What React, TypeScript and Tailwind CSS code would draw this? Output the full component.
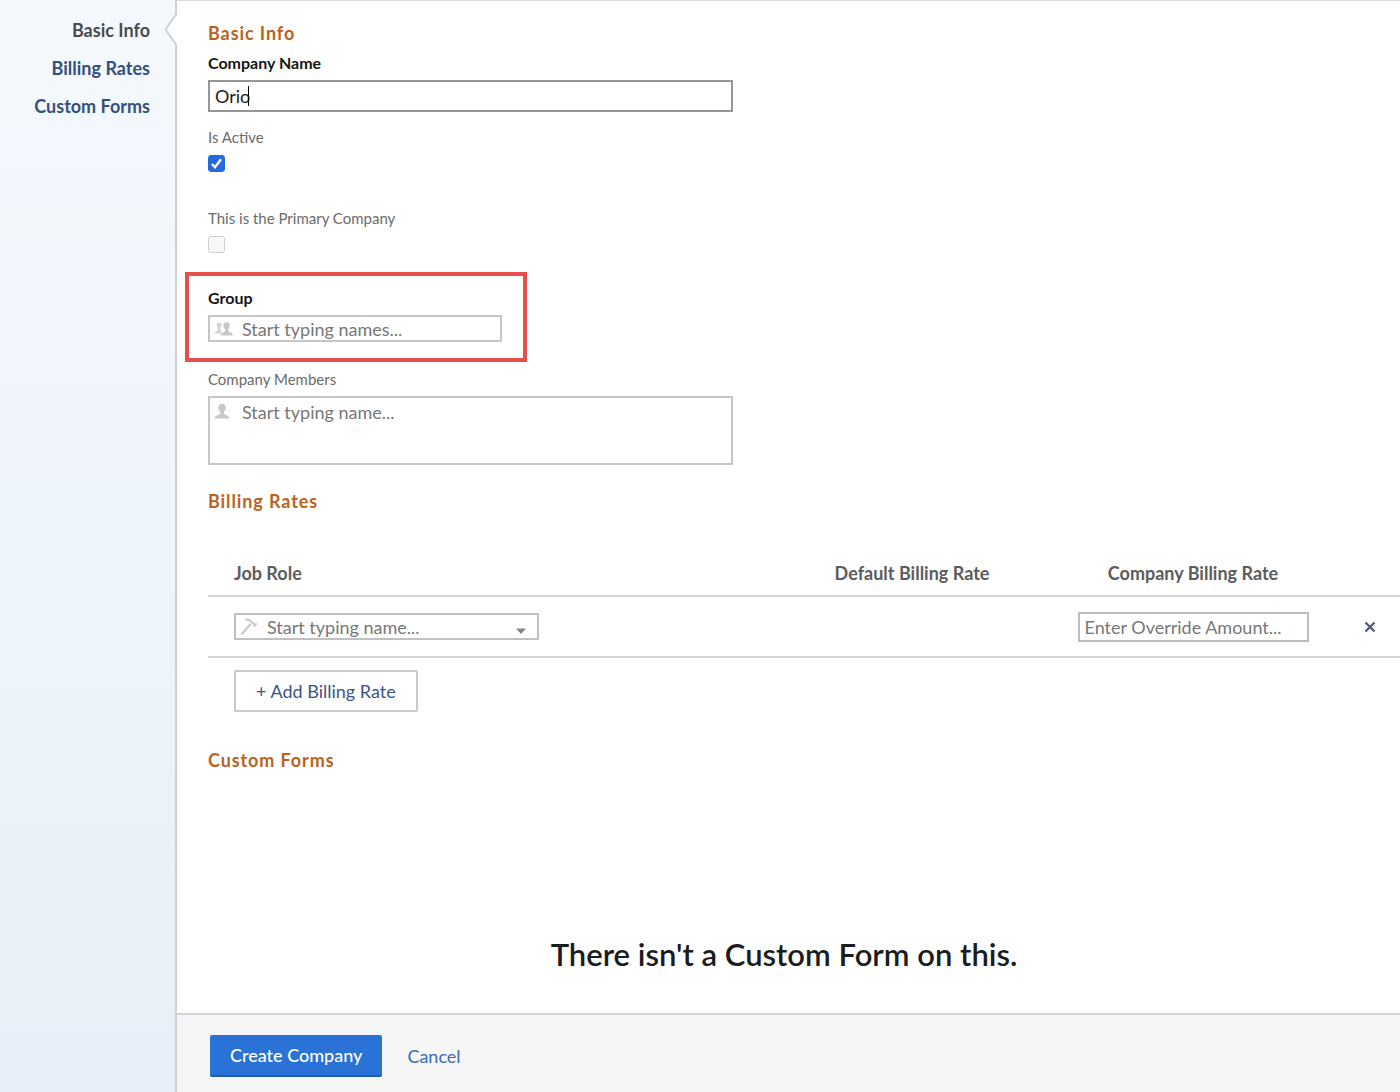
import { useState, type InputHTMLAttributes, type ReactNode } from "react";

const navItems = [
  { label: "Basic Info", href: "#basic-info" },
  { label: "Billing Rates", href: "#billing-rates" },
  { label: "Custom Forms", href: "#custom-forms" },
];

function PersonIcon() {
  return (
    <svg viewBox="0 0 16 16" className="mt-px h-4 w-4 fill-[#c8c8c8]" aria-hidden="true">
      <path d="M8 0.8c2.4 0 3.8 1.5 3.7 3.7-.1 1.900-.7 3.300-1.700 4.300v1.700c0 .9 1 1.200 2.500 1.700 1.700.500 2.700 1.200 2.700 3.300H.8c0-2.100 1-2.800 2.700-3.300C5 11.700 6 11.400 6 10.500V8.800C5 7.800 4.400 6.400 4.300 4.500 4.200 2.300 5.600.8 8 .8z" />
    </svg>
  );
}

function GroupIcon() {
  return (
    <svg viewBox="0 0 20 16" className="h-4 w-5" aria-hidden="true">
      <path
        className="fill-[#d4d4d4]"
        d="M3.200 1.800h3.600c.6.500.7 1.200.6 2.300-.1 1.300-.4 2.200-.9 2.900v2.300c0 .700.5 1 1.300 1.300l-1 2H.8c0-1.500.6-2 1.600-2.400.8-.3 1.300-.5 1.300-1.200V7c-.6-.7-1-1.600-1-2.900 0-1 .1-1.700.5-2.300z"
      />
      <path
        className="fill-[#c8c8c8]"
        d="M12.600 1.200c2.200 0 3.300 1.200 3.200 3-.1 1.700-.6 2.900-1.500 3.800v1.800c0 .8.900 1.200 2.200 1.600 1.600.5 2.300 1.200 2.300 3.100H6.600c0-1.900.7-2.600 2.200-3.100 1.300-.4 2.200-.8 2.200-1.600V8C10.100 7.100 9.500 5.900 9.400 4.200c-.1-1.800 1-3 3.200-3z"
      />
    </svg>
  );
}

function HammerIcon() {
  return (
    <svg viewBox="0 0 18 18" className="h-[18px] w-[18px] fill-none stroke-[#cbcbcb]" aria-hidden="true">
      <path d="M1.500 16.500 11 5.500" strokeWidth="2.400" />
      <path d="M5.500 1.600c2.400-.2 4.200.6 5.800 2l4.700 4" strokeWidth="2" />
      <path d="M13.600 8.600l3-3.200" strokeWidth="2" />
    </svg>
  );
}

function SectionTitle({ children, id }: { children: ReactNode; id: string }) {
  return (
    <h2 id={id} className="text-lg leading-6 font-bold tracking-wider text-[#b9631f]">
      {children}
    </h2>
  );
}

function FieldLabel({ htmlFor, required, children }: { htmlFor: string; required?: boolean; children: ReactNode }) {
  return (
    <label
      htmlFor={htmlFor}
      className={
        required
          ? "block self-start text-base leading-5 font-bold text-[#151515]"
          : "block self-start text-[15px] leading-5 text-[#6b6b6b]"
      }
    >
      {children}
    </label>
  );
}

function Checkbox(props: InputHTMLAttributes<HTMLInputElement>) {
  return (
    <span className="relative block h-[17px] w-[17px]">
      <input
        type="checkbox"
        className="peer block h-full w-full appearance-none rounded-[3px] border border-[#cfcfcf] bg-[#f8f8f8] checked:border-[#2569e0] checked:bg-[#2569e0]"
        {...props}
      />
      <svg
        viewBox="0 0 17 17"
        className="pointer-events-none absolute inset-0 hidden h-full w-full fill-none stroke-white peer-checked:block"
        aria-hidden="true"
      >
        <path d="M4 9l3 3.200 6-8" strokeWidth="2.400" />
      </svg>
    </span>
  );
}

export default function App() {
  const [name, setName] = useState("Orio");
  const [active, setActive] = useState(true);

  return (
    <div className="flex min-h-screen bg-white font-['Lato','Open_Sans',sans-serif]">
      <aside className="relative w-[177px] shrink-0 border-r-2 border-[#cdd0d4] bg-linear-to-b from-[#f5f9fe] to-[#e7f0f8]">
        <nav className="flex flex-col items-end gap-[14px] pt-[18px] pr-[25px] text-lg leading-6 font-bold">
          {navItems.map((item, i) => (
            <a key={item.href} href={item.href} className={i === 0 ? "text-[#4a4b4d]" : "text-[#34507f]"}>
              {item.label}
            </a>
          ))}
        </nav>
        <svg viewBox="0 0 13 34" className="absolute top-[13px] -right-[2px] h-[34px] w-[13px]" aria-hidden="true">
          <path d="M13 0 1.500 16.500 13 34z" fill="#fff" />
          <path d="M12 0v1.500L1.500 16.500 12 31.500V34" fill="none" stroke="#cdd0d4" strokeWidth="2" />
        </svg>
      </aside>

      <div className="flex min-w-0 flex-1 flex-col border-t border-[#d9dbde]">
        <main className="flex-1 pt-5 pl-[31px]">
          <SectionTitle id="basic-info">Basic Info</SectionTitle>

          <div className="mt-2 flex max-w-[525px] flex-col gap-[7px]">
            <FieldLabel htmlFor="company-name" required>
              Company Name
            </FieldLabel>
            <div className="relative">
              <input
                id="company-name"
                value={name}
                onChange={(e) => setName(e.target.value)}
                className="block h-8 w-full border-2 border-[#969696] px-[5px] text-lg text-[#1c1c1c] outline-none"
              />
              <span className="absolute top-[6px] left-10 h-5 w-px bg-black" />
            </div>
          </div>

          <div className="mt-[15px] flex flex-col gap-2">
            <FieldLabel htmlFor="is-active">Is Active</FieldLabel>
            <Checkbox id="is-active" checked={active} onChange={(e) => setActive(e.target.checked)} />
          </div>

          <div className="mt-9 flex flex-col gap-2">
            <FieldLabel htmlFor="is-primary">This is the Primary Company</FieldLabel>
            <Checkbox id="is-primary" disabled />
          </div>

          <div className="relative mt-[35px] flex max-w-[294px] flex-col gap-[7px]">
            <div className="pointer-events-none absolute -top-4 -right-[25px] -bottom-5 -left-[23px] border-4 border-[#e84e4c]" />
            <FieldLabel htmlFor="group" required>
              Group
            </FieldLabel>
            <div className="flex h-[27px] items-center gap-2 border-2 border-[#c6c6c6] pl-1">
              <GroupIcon />
              <input
                id="group"
                placeholder="Start typing names..."
                className="min-w-0 flex-1 text-lg leading-6 outline-none placeholder:text-[#777]"
              />
            </div>
          </div>

          <div className="mt-[27px] flex max-w-[525px] flex-col gap-[7px]">
            <FieldLabel htmlFor="members">Company Members</FieldLabel>
            <div className="flex h-[69px] items-start gap-3 border-2 border-[#c6c6c6] pt-1 pl-1">
              <PersonIcon />
              <textarea
                id="members"
                rows={2}
                placeholder="Start typing name..."
                className="min-w-0 flex-1 resize-none text-lg leading-5 outline-none placeholder:text-[#777]"
              />
            </div>
          </div>

          <div className="mt-6">
            <SectionTitle id="billing-rates">Billing Rates</SectionTitle>
          </div>

          <table className="mt-9 w-full table-fixed border-collapse">
            <thead>
              <tr className="h-[47px] border-b-2 border-[#d6d6d6] text-lg leading-6 font-bold text-[#5c5c5c]">
                <th className="pt-[2px] pl-[26px] text-left">Job Role</th>
                <th className="w-[268px] pt-[2px]">Default Billing Rate</th>
                <th className="w-[294px] pt-[2px]">Company Billing Rate</th>
                <th className="w-[60px]" aria-label="Remove" />
              </tr>
            </thead>
            <tbody>
              <tr className="h-[61px] border-b-2 border-[#d6d6d6]">
                <td className="pl-[26px]">
                  <div className="flex h-[27px] max-w-[305px] items-center gap-[9px] border-2 border-[#c0c0c0] pr-[10px] pl-1">
                    <HammerIcon />
                    <input
                      aria-label="Job Role"
                      role="combobox"
                      aria-expanded={false}
                      placeholder="Start typing name..."
                      className="min-w-0 flex-1 text-lg leading-6 outline-none placeholder:text-[#777]"
                    />
                    <button type="button" aria-label="Show job roles" className="pt-2">
                      <svg viewBox="0 0 12 8" className="h-2 w-3 fill-[#858585]" aria-hidden="true">
                        <path d="M1 1.500h10L6 7z" />
                      </svg>
                    </button>
                  </div>
                </td>
                <td />
                <td>
                  <input
                    aria-label="Company Billing Rate"
                    placeholder="Enter Override Amount..."
                    className="mx-auto block h-[30px] w-[231px] border-2 border-[#bdbdbd] px-[5px] text-lg outline-none placeholder:text-[#777]"
                  />
                </td>
                <td className="text-center">
                  <button type="button" aria-label="Remove billing rate" className="mx-auto block">
                    <svg viewBox="0 0 12 12" className="h-3 w-3 stroke-[#545b7e]" aria-hidden="true">
                      <path d="M1.500 1.500l9 9M10.500 1.500l-9 9" strokeWidth="2.400" />
                    </svg>
                  </button>
                </td>
              </tr>
            </tbody>
          </table>

          <button
            type="button"
            className="mt-3 ml-[26px] block h-[42px] rounded-[2px] border-2 border-[#cacaca] px-5 text-lg text-[#3b5488]"
          >
            + Add Billing Rate
          </button>

          <div className="mt-9">
            <SectionTitle id="custom-forms">Custom Forms</SectionTitle>
          </div>
          <p className="mt-[162px] pr-10 text-center text-[31px] leading-10 font-semibold text-[#1b1c20]">
            There isn't a Custom Form on this.
          </p>
        </main>

        <footer className="flex h-[79px] items-center gap-[25px] border-t-2 border-[#d3d5d8] bg-[#f6f6f7] pt-1 pl-[33px] text-lg">
          <button
            type="button"
            className="h-[42px] rounded-[2px] border-b-2 border-[#1f5cae] bg-[#2a72d5] px-5 font-medium text-white"
          >
            Create Company
          </button>
          <button type="button" className="text-[#3a6ab8]">
            Cancel
          </button>
        </footer>
      </div>
    </div>
  );
}
